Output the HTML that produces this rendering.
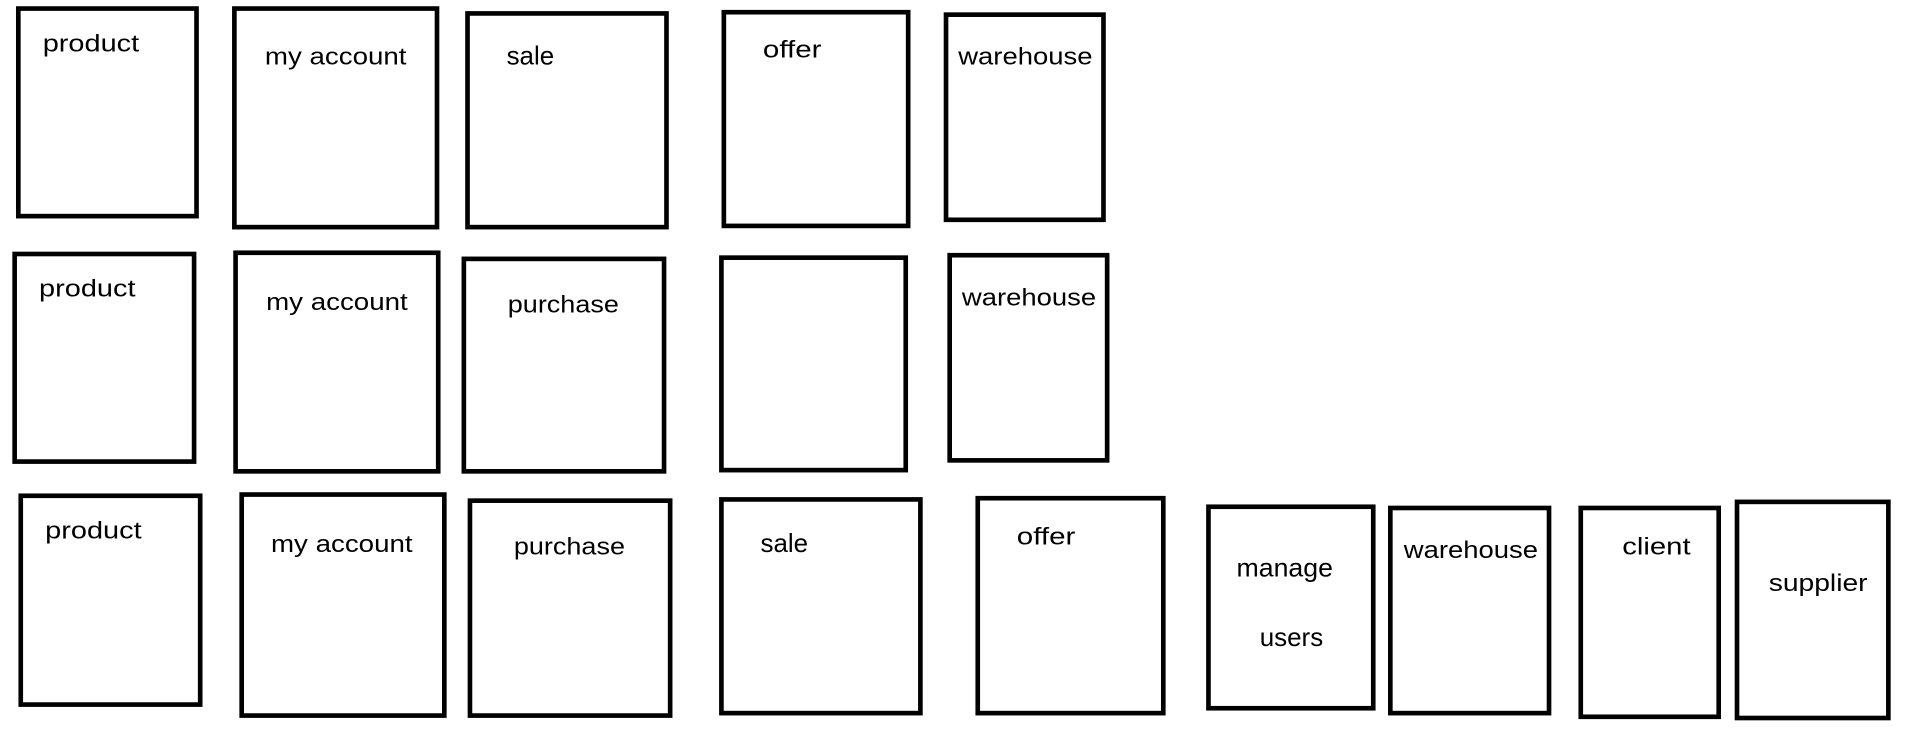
<!DOCTYPE html>
<html><head><meta charset="utf-8"><style>html,body{margin:0;padding:0;background:#fff;overflow:hidden}svg{display:block}</style></head><body>
<svg width="1914" height="729" viewBox="0 0 1568 597" preserveAspectRatio="none" xmlns="http://www.w3.org/2000/svg">
<g fill="none" stroke="#000" stroke-width="3.8">
<rect x="15" y="7" width="146" height="170"/>
<rect x="192" y="7" width="166" height="179"/>
<rect x="383" y="11" width="163" height="175"/>
<rect x="593" y="10" width="151" height="175"/>
<rect x="775" y="12" width="129" height="168"/>
<rect x="12" y="208" width="147" height="170"/>
<rect x="193" y="207" width="166" height="179"/>
<rect x="380" y="212" width="164" height="174"/>
<rect x="591" y="211" width="151" height="174"/>
<rect x="778" y="209" width="129" height="168"/>
<rect x="17" y="406" width="147" height="171"/>
<rect x="198" y="405" width="166" height="181"/>
<rect x="385" y="410" width="164" height="176"/>
<rect x="591" y="409" width="163" height="175"/>
<rect x="801" y="408" width="152" height="176"/>
<rect x="990" y="415" width="135" height="165"/>
<rect x="1139" y="416" width="130" height="168"/>
<rect x="1295" y="416" width="113" height="171"/>
<rect x="1423" y="411" width="124" height="177"/>
</g>
<g font-family="Liberation Sans, sans-serif" font-size="20" fill="#000">
<text x="35" y="42" textLength="79" lengthAdjust="spacingAndGlyphs">product</text>
<text x="217" y="53" textLength="116" lengthAdjust="spacingAndGlyphs">my account</text>
<text x="415" y="53" textLength="39" font-size="21" lengthAdjust="spacingAndGlyphs">sale</text>
<text x="625" y="47" textLength="48" lengthAdjust="spacingAndGlyphs">offer</text>
<text x="785" y="53" textLength="110" lengthAdjust="spacingAndGlyphs">warehouse</text>
<text x="32" y="243" textLength="79" lengthAdjust="spacingAndGlyphs">product</text>
<text x="218" y="254" textLength="116" lengthAdjust="spacingAndGlyphs">my account</text>
<text x="416" y="256" textLength="91" lengthAdjust="spacingAndGlyphs">purchase</text>
<text x="788" y="250" textLength="110" lengthAdjust="spacingAndGlyphs">warehouse</text>
<text x="37" y="441" textLength="79" lengthAdjust="spacingAndGlyphs">product</text>
<text x="222" y="452" textLength="116" lengthAdjust="spacingAndGlyphs">my account</text>
<text x="421" y="454" textLength="91" lengthAdjust="spacingAndGlyphs">purchase</text>
<text x="623" y="452" textLength="39" font-size="21" lengthAdjust="spacingAndGlyphs">sale</text>
<text x="833" y="446" textLength="48" lengthAdjust="spacingAndGlyphs">offer</text>
<text x="1013" y="472" textLength="79" font-size="21" lengthAdjust="spacingAndGlyphs">manage</text>
<text x="1032" y="529" textLength="52" font-size="21" lengthAdjust="spacingAndGlyphs">users</text>
<text x="1150" y="457" textLength="110" lengthAdjust="spacingAndGlyphs">warehouse</text>
<text x="1329" y="454" textLength="56" lengthAdjust="spacingAndGlyphs">client</text>
<text x="1449" y="484" textLength="81" lengthAdjust="spacingAndGlyphs">supplier</text>
</g>
</svg>
</body></html>
